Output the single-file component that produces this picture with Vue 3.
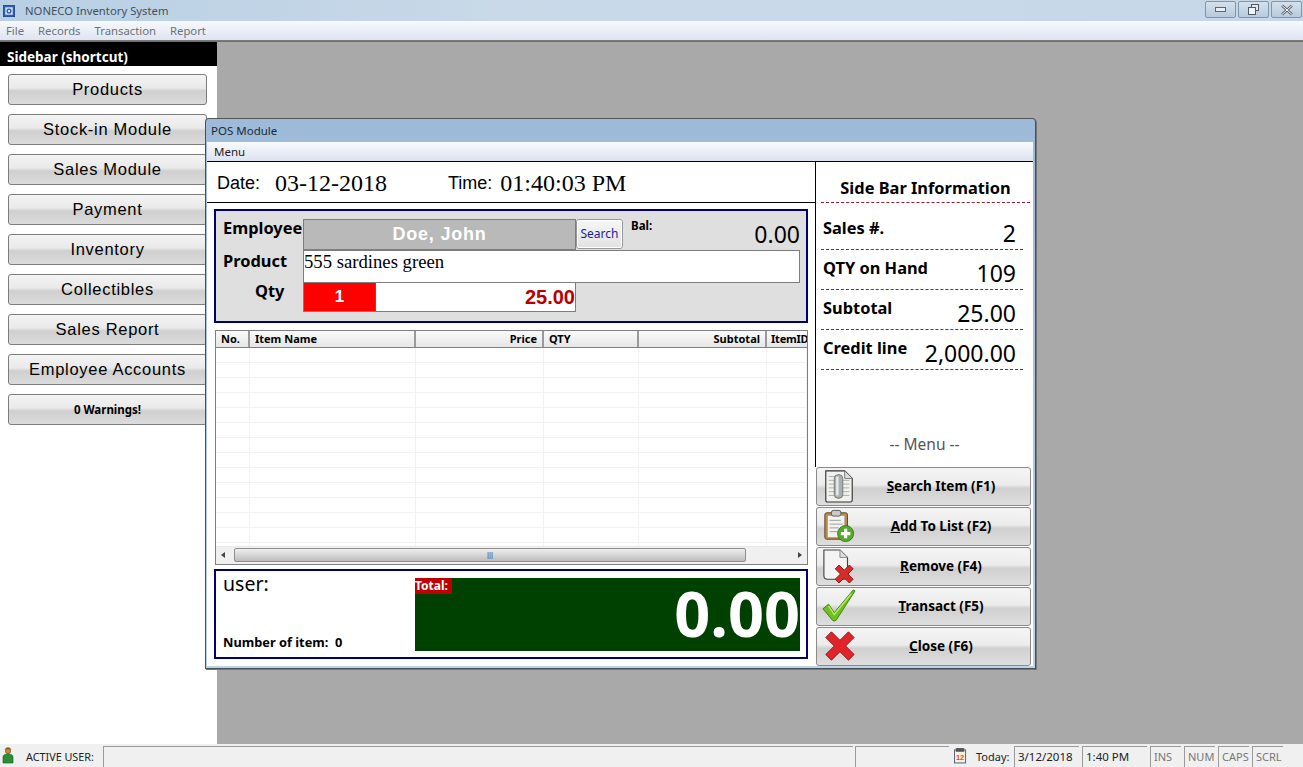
<template>
  <div class="app">
    <!-- title bar -->
    <div class="titlebar">
      <svg class="app-icon" viewBox="0 0 16 16">
        <rect x="0.5" y="0.5" width="15" height="15" fill="#2c5fb8" stroke="#1b3f86" />
        <rect x="3" y="3" width="10" height="10" fill="#cfe0f5" />
        <circle cx="8" cy="8" r="3.4" fill="#2c5fb8" />
        <circle cx="8" cy="8" r="1.5" fill="#fff" />
      </svg>
      <span class="app-title">NONECO Inventory System</span>
      <div class="win-buttons">
        <div class="win-btn">
          <svg width="12" height="6" viewBox="0 0 12 6"><rect x="0.5" y="0.5" width="10" height="4" fill="#e8eef4" stroke="#5b6672" /></svg>
        </div>
        <div class="win-btn">
          <svg width="13" height="12" viewBox="0 0 13 12">
            <rect x="4.5" y="0.5" width="7" height="6" fill="#dfe7ef" stroke="#4f5a66" />
            <rect x="1.5" y="3.5" width="7" height="7" fill="#eef3f7" stroke="#4f5a66" />
          </svg>
        </div>
        <div class="win-btn">
          <svg width="14" height="12" viewBox="0 0 14 12"><path d="M2 1.5 L12 10.5 M12 1.5 L2 10.5" stroke="#5b6672" stroke-width="2.6" /><path d="M2 1.5 L12 10.5 M12 1.5 L2 10.5" stroke="#f4f7fa" stroke-width="1" /></svg>
        </div>
      </div>
    </div>

    <!-- main menu -->
    <div class="menubar">
      <span v-for="m in mainMenu" :key="m">{{ m }}</span>
    </div>

    <div class="workspace">
      <!-- sidebar -->
      <aside class="sidebar">
        <div class="side-head">Sidebar (shortcut)</div>
        <div class="side-list">
          <div v-for="s in shortcuts" :key="s" class="side-btn">{{ s }}</div>
          <div class="side-btn warn">0 Warnings!</div>
        </div>
      </aside>

      <!-- POS child window -->
      <div class="pos">
        <div class="pos-title">POS Module</div>
        <div class="pos-menu">Menu</div>
        <div class="pos-body">
          <div class="pos-left">
            <div class="datebar">
              <span class="lbl date-lbl">Date:</span><span class="val date-val">03-12-2018</span>
              <span class="lbl time-lbl">Time:</span><span class="val">01:40:03 PM</span>
            </div>

            <div class="entry">
              <div class="entry-labels">
                <b>Employee</b>
                <b>Product</b>
                <b class="qty-lbl">Qty</b>
              </div>
              <div class="entry-fields">
                <div class="row-emp">
                  <div class="emp-name">Doe, John</div>
                  <div class="search-btn">Search</div>
                  <div class="bal"><b>Bal:</b><span>0.00</span></div>
                </div>
                <div class="product">555 sardines green</div>
                <div class="row-qty">
                  <div class="qty">1</div>
                  <div class="price">25.00</div>
                </div>
              </div>
            </div>

            <div class="grid">
              <div class="grid-head">
                <div v-for="c in columns" :key="c.name" class="th" :class="{ right: c.right }" :style="{ width: c.w + 'px' }">{{ c.name }}</div>
              </div>
              <div class="grid-rows">
                <div v-for="n in 14" :key="n" class="tr">
                  <div v-for="c in columns" :key="c.name" class="td" :style="{ width: c.w + 'px' }"></div>
                </div>
              </div>
              <div class="hscroll">
                <span class="arrow left"></span>
                <div class="thumb"><span>|||</span></div>
                <span class="arrow rightw"></span>
              </div>
            </div>

            <div class="summary">
              <div class="sum-left">
                <div class="user">user:</div>
                <div class="count">Number of item:&nbsp; 0</div>
              </div>
              <div class="total">
                <span class="total-lbl">Total:</span>
                <span class="total-val">0.00</span>
              </div>
            </div>
          </div>

          <div class="pos-right">
            <div class="info-head">Side Bar Information</div>
            <div v-for="r in infoRows" :key="r.label" class="info-row">
              <b>{{ r.label }}</b><span>{{ r.value }}</span>
            </div>
            <div class="menu-cap">-- Menu --</div>
            <div class="actions">
              <div class="act">
                <svg class="act-icon" viewBox="0 0 36 36">
                  <path d="M4 2 H24 L32 10 V33 Q32 35 30 35 H6 Q4 35 4 33 Z" fill="#f1f1ee" stroke="#333" stroke-width="1.2" />
                  <path d="M24 2 V10 H32" fill="#ddd" stroke="#777" />
                  <path d="M7 8 H21 M7 12 H29 M7 16 H29 M7 20 H29 M7 24 H29 M7 28 H29" stroke="#aaa" stroke-width="1" />
                  <rect x="13" y="6" width="9" height="25" rx="4" fill="#a9aeb0" stroke="#777" />
                  <rect x="15" y="8" width="2.5" height="20" fill="#e9ecec" />
                </svg>
                <span><u>S</u>earch Item (F1)</span>
              </div>
              <div class="act">
                <svg class="act-icon" viewBox="0 0 36 36">
                  <rect x="3" y="4" width="24" height="28" rx="2" fill="#b98a4a" stroke="#5d4423" />
                  <rect x="6" y="7" width="18" height="23" fill="#f3f3f0" stroke="#999" stroke-width=".5" />
                  <rect x="10" y="1.5" width="10" height="6" rx="2" fill="#c9c9c9" stroke="#555" />
                  <path d="M8 12 H20 M8 16 H22 M8 20 H18 M8 24 H16" stroke="#9a9a9a" />
                  <circle cx="25" cy="26" r="8.5" fill="#53ab2c" stroke="#3a7e1c" />
                  <path d="M25 21 V31 M20 26 H30" stroke="#fff" stroke-width="3.4" />
                </svg>
                <span><u>A</u>dd To List (F2)</span>
              </div>
              <div class="act">
                <svg class="act-icon" viewBox="0 0 36 36">
                  <path d="M2 1 H19 L27 9 V28 Q27 32 23 32 H6 Q2 32 2 28 Z" fill="#f4f4f4" stroke="#444" stroke-width="1.2" />
                  <path d="M19 1 V9 H27" fill="#ddd" stroke="#888" />
                  <path d="M14 21 L18 17 L23.5 22.5 L29 17 L33 21 L27.5 26.5 L33 32 L29 36 L23.5 30.5 L18 36 L14 32 L19.5 26.5 Z" fill="#d92a2a" stroke="#8f1515" />
                </svg>
                <span><u>R</u>emove (F4)</span>
              </div>
              <div class="act">
                <svg class="act-icon" viewBox="0 0 36 36">
                  <path d="M1 21 L7 16 L13 25 L33 1 L35 2 L15 33 Q13 35 11 33 Z" fill="#6fbf1e" stroke="#3f7f10" />
                  <path d="M7 18 L13 27 L31 5" fill="none" stroke="#b8e866" stroke-width="1.5" />
                </svg>
                <span><u>T</u>ransact (F5)</span>
              </div>
              <div class="act">
                <svg class="act-icon" viewBox="0 0 36 36">
                  <path d="M4 9 L10 3 L19 12 L28 3 L34 9 L25 18 L34 27 L28 33 L19 24 L10 33 L4 27 L13 18 Z" fill="#e0242a" stroke="#8f1216" stroke-linejoin="round" />
                </svg>
                <span><u>C</u>lose (F6)</span>
              </div>
            </div>
          </div>
        </div>
      </div>
    </div>

    <!-- status bar -->
    <div class="statusbar">
      <svg class="user-icon" viewBox="0 0 12 18">
        <path d="M2.5 3.5 Q6 -1 9.5 3.5 Z" fill="#8a5a1e" />
        <circle cx="6" cy="5" r="2.6" fill="#c98a3c" stroke="#6c4215" stroke-width=".6" />
        <path d="M1 17 V11 Q1 8 6 8 Q11 8 11 11 V17 Z" fill="#2a8f36" stroke="#15591d" stroke-width=".6" />
      </svg>
      <span class="active-lbl">ACTIVE USER:</span>
      <div class="cell fill"></div>
      <div class="cell blank"></div>
      <svg class="cal-icon" viewBox="0 0 14 17">
        <rect x="0.5" y="2.5" width="12" height="14" fill="#f6f1dc" stroke="#55557a" />
        <rect x="2" y="0.5" width="9" height="4" fill="#555" />
        <text x="6.5" y="13" font-size="8" font-weight="700" text-anchor="middle" fill="#e0501a" font-family="Liberation Sans, sans-serif">12</text>
      </svg>
      <span class="today">Today:</span>
      <div class="cell date">3/12/2018</div>
      <div class="cell date">1:40 PM</div>
      <div class="cell key">INS</div>
      <div class="cell key">NUM</div>
      <div class="cell key">CAPS</div>
      <div class="cell key">SCRL</div>
    </div>
  </div>
</template>

<script setup>
const mainMenu = ['File', 'Records', 'Transaction', 'Report']

const shortcuts = [
  'Products',
  'Stock-in Module',
  'Sales Module',
  'Payment',
  'Inventory',
  'Collectibles',
  'Sales Report',
  'Employee Accounts'
]

const columns = [
  { name: 'No.', w: 34 },
  { name: 'Item Name', w: 166 },
  { name: 'Price', w: 128, right: true },
  { name: 'QTY', w: 95 },
  { name: 'Subtotal', w: 128, right: true },
  { name: 'ItemID', w: 40 }
]

const infoRows = [
  { label: 'Sales #.', value: '2' },
  { label: 'QTY on Hand', value: '109' },
  { label: 'Subtotal', value: '25.00' },
  { label: 'Credit line', value: '2,000.00' }
]
</script>

<style>
html, body {
  margin: 0;
  overflow: hidden;
}
</style>

<style scoped>
.app {
  width: 1303px;
  height: 767px;
  display: flex;
  flex-direction: column;
  overflow: hidden;
  font-family: "Noto Sans", "Liberation Sans", sans-serif;
  color: #000;
}

/* title + menu */
.titlebar {
  height: 21px;
  display: flex;
  align-items: center;
  padding-left: 2px;
  background: linear-gradient(90deg, #b8cfe4, #c9d9e8 40%, #c6d8e8);
}
.app-icon {
  width: 12px;
  height: 12px;
  margin-right: 10px;
  margin-left: 1px;
}
.app-title {
  font-size: 11.3px;
  color: #44505c;
}
.win-buttons {
  margin-left: auto;
  margin-right: 1px;
  display: flex;
  gap: 2px;
  align-self: flex-start;
  padding-top: 1px;
}
.win-btn {
  width: 31px;
  height: 17px;
  box-sizing: border-box;
  border: 1px solid #7f95aa;
  border-radius: 2px;
  display: flex;
  align-items: center;
  justify-content: center;
  background: linear-gradient(#d5e1ec, #b7cbdd);
}
.menubar {
  height: 20px;
  display: flex;
  align-items: center;
  gap: 14px;
  padding-left: 6px;
  font-size: 11.3px;
  color: #6a727b;
  background: linear-gradient(#f6f9fc, #e0e4f1);
  box-sizing: border-box;
  border-bottom: 1px solid #7a7a7a;
}

/* workspace */
.workspace {
  position: relative;
  flex: 1;
  display: flex;
  background: #a9a9a9;
  border-top: 1px solid #6f6f6f;
}
.sidebar {
  width: 217px;
  background: #fff;
}
.side-head {
  height: 24px;
  box-sizing: border-box;
  padding: 4px 0 0 7px;
  line-height: 22px;
  background: #000;
  color: #fff;
  font-size: 13.5px;
  font-weight: 700;
  white-space: nowrap;
}
.side-list {
  display: flex;
  flex-direction: column;
  gap: 9px;
  padding: 8px 10px 0 8px;
}
.side-btn {
  height: 29px;
  line-height: 28px;
  text-align: center;
  font-family: "Liberation Sans", Arial, sans-serif;
  font-size: 16.5px;
  letter-spacing: 0.7px;
  border: 1px solid #7c7c7c;
  border-radius: 3px;
  background: linear-gradient(#f4f4f4, #e9e9e9 45%, #cfcfcf 55%, #dcdcdc);
}
.side-btn.warn {
  font-family: "Noto Sans", sans-serif;
  font-size: 11.5px;
  font-weight: 700;
  letter-spacing: 0;
  line-height: 30px;
}

/* POS window */
.pos {
  position: absolute;
  left: 205px;
  top: 76px;
  width: 831px;
  height: 551px;
  box-sizing: border-box;
  display: flex;
  flex-direction: column;
  border: 1px solid #4a4f55;
  border-top-color: #555;
  border-radius: 4px 4px 0 0;
  background: linear-gradient(#9dbad8, #bcd3e8);
  padding: 0 2px 2px 1px;
  box-shadow: 1px 1px 0 #777;
}
.pos-title {
  height: 23px;
  line-height: 24px;
  padding-left: 4px;
  font-size: 11.5px;
  color: #1c2a38;
  flex: none;
}
.pos-menu {
  height: 19px;
  line-height: 19px;
  padding-left: 7px;
  font-size: 11.5px;
  color: #222;
  background: linear-gradient(#f8fafc, #dde2f1);
  border-bottom: 1px solid #000;
  flex: none;
}
.pos-body {
  flex: 1;
  display: flex;
  background: #fff;
  min-height: 0;
}
.pos-left {
  width: 608px;
  flex: none;
  border-right: 1px solid #000;
  height: 305px;
  box-sizing: content-box;
}
.datebar {
  height: 41px;
  box-sizing: border-box;
  display: flex;
  align-items: center;
  padding: 2px 0 0 10px;
  border-bottom: 1px solid #000;
  margin-bottom: 6px;
}
.lbl {
  font-family: "Liberation Sans", Arial, sans-serif;
  font-size: 18px;
}
.val {
  font-family: "Liberation Serif", "Times New Roman", serif;
  font-size: 24px;
  margin-left: 8px;
}
.date-val {
  margin-left: 15px;
}
.time-lbl {
  margin-left: 61px;
}

/* entry panel */
.entry {
  width: 594px;
  height: 114px;
  margin-left: 7px;
  box-sizing: border-box;
  border: 2px solid #000070;
  background: #dfdfdf;
  display: flex;
  padding: 8px 6px 0 7px;
}
.entry-labels {
  width: 80px;
  flex: none;
  display: flex;
  flex-direction: column;
  font-size: 16.4px;
}
.entry-labels b {
  height: 32px;
  line-height: 17px;
  white-space: nowrap;
}
.entry-labels b + b {
  line-height: 19px;
}
.entry-labels .qty-lbl {
  padding-left: 32px;
  line-height: 15px;
}
.entry-fields {
  flex: 1;
}
.row-emp {
  display: flex;
  height: 31px;
}
.emp-name {
  width: 273px;
  box-sizing: border-box;
  background: #b9b9b9;
  border: 1px solid #7d7d7d;
  color: #fff;
  font-family: "Liberation Sans", Arial, sans-serif;
  font-weight: 700;
  font-size: 18px;
  letter-spacing: 0.8px;
  text-align: center;
  line-height: 28px;
}
.search-btn {
  width: 47px;
  height: 30px;
  box-sizing: border-box;
  border: 1px solid #999;
  border-radius: 3px;
  outline: 1px solid #fff;
  outline-offset: -2px;
  background: linear-gradient(#f6f6f6, #e2e2e2);
  color: #1a1a9c;
  font-size: 12px;
  text-align: center;
  line-height: 28px;
}
.bal {
  flex: 1;
  display: flex;
  justify-content: space-between;
  padding-left: 8px;
}
.bal b {
  font-size: 11.5px;
  line-height: 13px;
}
.bal span {
  font-size: 23px;
  line-height: 30px;
}
.product {
  height: 33px;
  width: 497px;
  box-sizing: border-box;
  background: #fff;
  border: 1px solid #7d7d7d;
  font-family: "Liberation Serif", serif;
  font-size: 18.7px;
  line-height: 22px;
}
.row-qty {
  display: flex;
  height: 29px;
  width: 273px;
  box-sizing: border-box;
  border: 1px solid #7d7d7d;
  border-top: 0;
  background: #fff;
}
.qty {
  width: 72px;
  box-sizing: border-box;
  background: #fd0000;
  border-right: 1px solid #8a4a4a;
  color: #fff;
  font-family: "Liberation Sans", sans-serif;
  font-weight: 700;
  font-size: 17px;
  text-align: center;
  line-height: 28px;
}
.price {
  flex: 1;
  text-align: right;
  color: #b80000;
  font-family: "Liberation Sans", sans-serif;
  font-weight: 700;
  font-size: 20px;
  line-height: 28px;
}

/* grid */
.grid {
  width: 593px;
  height: 235px;
  margin: 7px 0 4px 8px;
  box-sizing: border-box;
  border: 1px solid #808080;
  display: flex;
  flex-direction: column;
}
.grid-head {
  display: flex;
  height: 16px;
  flex: none;
  border-bottom: 1px solid #808080;
  background: linear-gradient(#fafafa, #e6e6e6);
}
.th {
  box-sizing: border-box;
  flex: none;
  overflow: hidden;
  white-space: nowrap;
  padding: 0 5px;
  font-size: 11px;
  font-weight: 700;
  line-height: 16px;
  border-right: 2px solid #9a9a9a;
}
.th:last-child {
  border-right: 0;
  padding: 0 0 0 4px;
  letter-spacing: -0.2px;
}
.th.right {
  text-align: right;
}
.grid-rows {
  flex: 1;
  overflow: hidden;
}
.tr {
  display: flex;
  height: 14px;
  border-bottom: 1px solid #f2f2f2;
}
.td {
  box-sizing: border-box;
  flex: none;
  border-right: 1px solid #f2f2f2;
}
.hscroll {
  height: 18px;
  flex: none;
  box-sizing: border-box;
  display: flex;
  align-items: center;
  background: #f0f0f0;
  border-top: 1px solid #e8e8e8;
  padding: 0 5px 2px;
}
.arrow {
  width: 0;
  height: 0;
  border-top: 3px solid transparent;
  border-bottom: 3px solid transparent;
}
.arrow.left {
  border-right: 4px solid #444;
}
.arrow.rightw {
  border-left: 4px solid #444;
  margin-left: auto;
}
.thumb {
  width: 512px;
  height: 14px;
  margin-left: 9px;
  box-sizing: border-box;
  border: 1px solid #8e8e8e;
  border-radius: 2px;
  background: linear-gradient(#eeeeee, #d6d6d6 50%, #bcbcbc);
  text-align: center;
  font-family: "Liberation Sans", sans-serif;
  font-size: 8px;
  line-height: 11px;
  color: #444;
}

/* bottom summary */
.summary {
  width: 594px;
  height: 90px;
  margin-left: 7px;
  box-sizing: border-box;
  border: 2px solid #000070;
  display: flex;
  justify-content: space-between;
  padding: 7px 6px 6px 7px;
}
.sum-left {
  display: flex;
  flex-direction: column;
  justify-content: space-between;
  padding-bottom: 2px;
}
.user {
  font-size: 19.5px;
  line-height: 12px;
}
.count {
  font-size: 12.8px;
  font-weight: 700;
  line-height: 14px;
}
.total {
  position: relative;
  width: 385px;
  background: #004000;
  text-align: right;
}
.total-lbl {
  position: absolute;
  left: 0;
  top: 0;
  width: 37px;
  height: 16px;
  background: #c00000;
  color: #fff;
  font-size: 12px;
  font-weight: 700;
  line-height: 15px;
  text-align: left;
}
.total-val {
  display: block;
  color: #fff;
  font-family: "Noto Sans", sans-serif;
  font-weight: 700;
  font-size: 63px;
  line-height: 70px;
}

/* right column */
.pos-right {
  flex: 1;
  display: flex;
  flex-direction: column;
}
.info-head {
  width: 209px;
  margin-left: 5px;
  height: 41px;
  box-sizing: border-box;
  border-bottom: 1px dashed #9a1a2e;
  text-align: center;
  font-size: 16.4px;
  font-weight: 700;
  line-height: 52px;
  white-space: nowrap;
}
.info-row {
  width: 202px;
  height: 40px;
  margin-left: 5px;
  box-sizing: border-box;
  border-bottom: 1px dashed #9a1a2e;
  display: flex;
  justify-content: space-between;
  padding: 0 7px 0 2px;
}
.info-head + .info-row {
  height: 47px;
  padding-top: 7px;
}
.info-row b {
  font-size: 16.4px;
  line-height: 36px;
  white-space: nowrap;
}
.info-row span {
  font-size: 23px;
  line-height: 46px;
  white-space: nowrap;
}
.menu-cap {
  text-align: center;
  font-size: 15.5px;
  color: #555;
  height: 97px;
  line-height: 148px;
  flex: none;
}
.actions {
  display: flex;
  flex-direction: column;
  gap: 1px;
}
.act {
  position: relative;
  width: 215px;
  height: 39px;
  box-sizing: border-box;
  border: 1px solid #8a8a8a;
  border-radius: 3px;
  background: linear-gradient(#f4f4f4, #ececec 45%, #d0d0d0 55%, #dedede);
  display: flex;
  align-items: center;
  justify-content: center;
  font-size: 13.5px;
  font-weight: 700;
  padding: 0 0 1px 35px;
}
.act-icon {
  position: absolute;
  left: 5px;
  top: 1px;
  width: 34px;
  height: 34px;
}

/* status bar */
.statusbar {
  height: 23px;
  flex: none;
  display: flex;
  align-items: stretch;
  background: #f0f0f0;
  padding-top: 2px;
  box-sizing: border-box;
  font-size: 11px;
  color: #222;
}
.user-icon {
  width: 12px;
  height: 18px;
  margin: 0 0 0 2px;
}
.active-lbl {
  margin-left: 12px;
  width: 77px;
  flex: none;
  line-height: 21px;
  font-size: 10.8px;
  white-space: nowrap;
}
.cell {
  box-sizing: border-box;
  border-top: 1px solid #9a9a9a;
  border-left: 1px solid #9a9a9a;
  margin-right: 3px;
  flex: none;
  line-height: 20px;
  padding-left: 3px;
}
.cell.fill {
  width: 750px;
  margin-right: 2px;
}
.cell.blank {
  width: 94px;
  margin-right: 5px;
}
.cal-icon {
  width: 13px;
  height: 17px;
  margin-top: 1px;
}
.today {
  margin-left: 9px;
  width: 38px;
  flex: none;
  line-height: 21px;
}
.cell.date {
  width: 65px;
  font-size: 11.5px;
}
.cell.key {
  width: 31px;
  color: #777;
  font-size: 11px;
  overflow: hidden;
  white-space: nowrap;
}
</style>
